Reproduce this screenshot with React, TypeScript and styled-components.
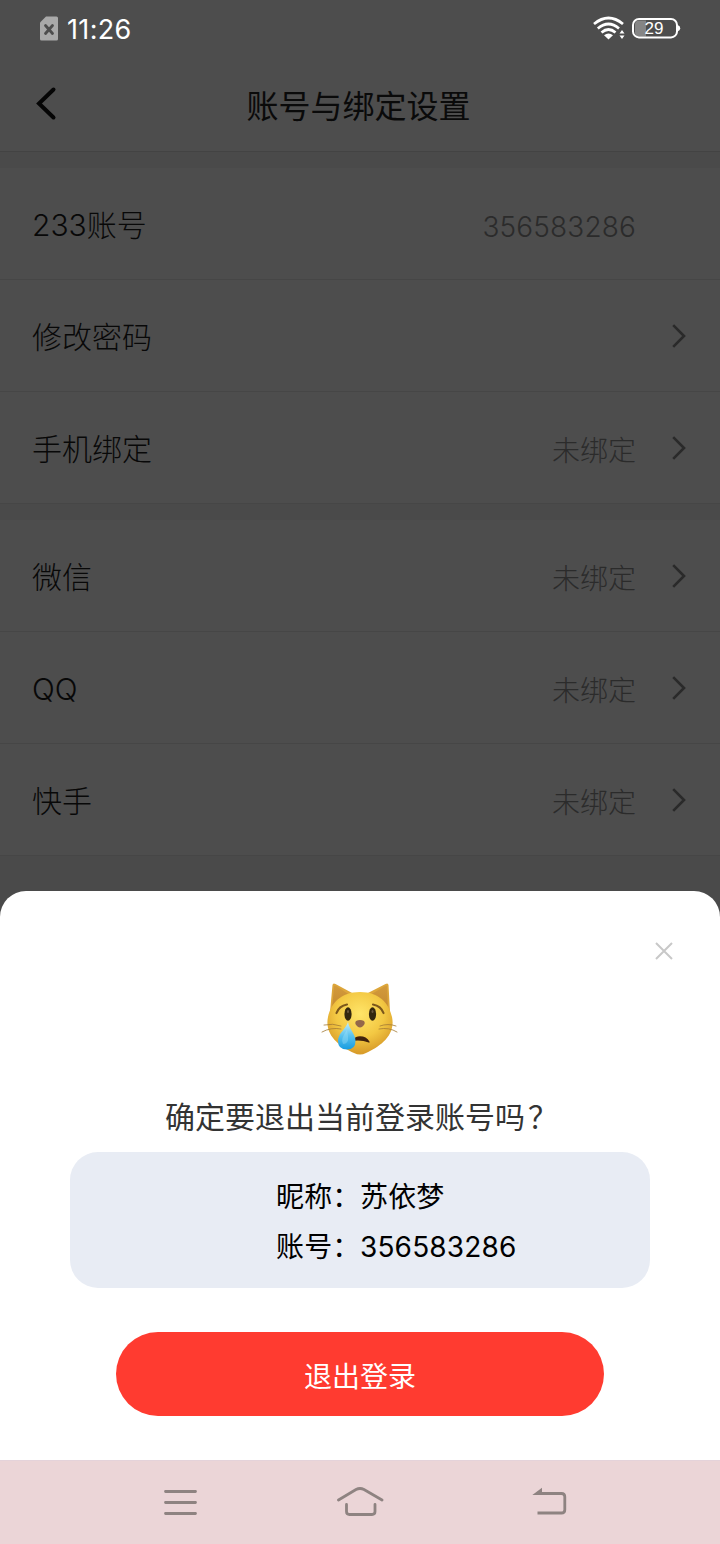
import React from "react";
import styled, { createGlobalStyle } from "styled-components";

const Global = createGlobalStyle`
  * { box-sizing: border-box; }
  body { margin: 0; background: #4a4a4a; font-family: Inter, "Noto Sans CJK SC", sans-serif; }
  button { font: inherit; border: 0; padding: 0; background: none; display: flex; align-items: center; justify-content: center; }
  svg { display: block; flex: none; }
`;

const Screen = styled.div`
  width: 720px;
  height: 1544px;
  display: flex;
  flex-direction: column;
  background: #4a4a4a;
  overflow: hidden;
`;

const StatusBar = styled.div`
  height: 56px;
  flex: none;
  display: flex;
  align-items: center;
  padding: 0 39px 0 40px;
  background: #4d4d4d;
  color: #fff;
`;

const Clock = styled.span`
  margin-left: 8px;
  padding-top: 4px;
  font-size: 27px;
  line-height: 32px;
  letter-spacing: 0.35px;
  flex: 1;
`;

const StatusIcons = styled.div`
  display: flex;
  align-items: flex-end;
  gap: 6px;
`;

const Header = styled.header`
  height: 96px;
  flex: none;
  display: grid;
  grid-template-columns: 60px 1fr 60px;
  align-items: center;
  padding: 0 35px 0 32px;
  background: #4d4d4d;
  border-bottom: 1px solid #434343;
`;

const Title = styled.h1`
  margin: 0;
  padding-top: 6px;
  text-align: center;
  font-size: 32px;
  font-weight: 400;
  line-height: 46px;
  color: #0a0a0a;
`;

const Group = styled.section`
  flex: none;
  margin-top: 16px;
`;

const Row = styled.div`
  height: 112px;
  display: flex;
  align-items: center;
  padding: 2px 32px 0;
  background: #4d4d4d;
  border-bottom: 1px solid #464646;
`;

const Label = styled.span`
  flex: 1;
  font-size: 30px;
  font-weight: 300;
  line-height: 44px;
  color: #080808;
`;

const Value = styled.span<{ $numeric?: boolean }>`
  width: 200px;
  margin-right: 35px;
  padding-top: 5px;
  text-align: right;
  font-size: 28px;
  font-weight: 300;
  line-height: 40px;
  letter-spacing: ${(p) => (p.$numeric ? "0.15px" : "0")};
  color: #2b2b2b;
`;

const ChevronSlot = styled.span`
  width: 17px;
  display: flex;
`;

const Filler = styled.div`
  flex: 1;
`;

const Sheet = styled.section`
  height: 569px;
  flex: none;
  display: flex;
  flex-direction: column;
  align-items: center;
  background: #fff;
  border-radius: 26px 26px 0 0;
  padding-top: 46px;
`;

const CloseButton = styled.button`
  align-self: flex-end;
  width: 28px;
  height: 28px;
  margin: 0 42px 15px 0;
`;

const Question = styled.h2`
  margin: 39px 0 0;
  padding-left: 3px;
  font-size: 30px;
  font-weight: 400;
  line-height: 44px;
  white-space: nowrap;
  color: #333;
`;

const QuestionMark = styled.span`
  margin-left: 3px;
`;

const AccountCard = styled.dl`
  width: 580px;
  height: 136px;
  margin: 13px 0 0;
  padding: 20px 0 0 206px;
  display: grid;
  grid-template-columns: 84px 1fr;
  grid-auto-rows: 50px;
  align-content: start;
  background: #e8ecf4;
  border-radius: 28px;
  font-size: 28px;
  line-height: 50px;
  color: #000;
  dt, dd { margin: 0; height: 50px; white-space: nowrap; letter-spacing: 0.15px; }
`;

const LogoutButton = styled.button`
  width: 488px;
  height: 84px;
  margin-top: 44px;
  padding-top: 5px;
  border-radius: 42px;
  background: #ff3b30;
  color: #fff;
  font-size: 28px;
  line-height: 40px;
`;

const NavBar = styled.nav`
  height: 84px;
  flex: none;
  display: grid;
  grid-template-columns: 180px 190px 60px;
  padding: 0 150px;
  background: #ebd5d7;
  border-top: 1px solid #e4d3da;
`;

const NavButton = styled.button`
  width: 60px;
  height: 83px;
  padding-bottom: 1px;
`;

const Chevron = () => (
  <svg width="17" height="28" viewBox="0 0 17 28" fill="none" stroke="#2a2a2a" strokeWidth="2.6">
    <path d="M2.200 2.200 13 13 2.200 23.800" />
  </svg>
);

const SimIcon = () => (
  <svg width="19" height="25" viewBox="0 0 19 25">
    <path d="M6 .5H16.500Q18 .5 18 2V23Q18 24.500 16.500 24.500H1.500Q0 24.500 0 23V6.500Z" fill="#a9a9a9" />
    <path d="m5.500 9.500 7 8M12.500 9.500l-7 8" stroke="#4d4d4d" strokeWidth="2.8" strokeLinecap="round" />
  </svg>
);

const WifiIcon = () => (
  <svg width="33" height="24" viewBox="0 0 33 24" fill="none" stroke="#fff" strokeWidth="2.7">
    <path d="M1 8Q15.500-4 30 8M4.800 12.500Q15.500 3.500 26 12.500M8.500 16.500Q15.500 10.500 22.500 16.500" />
    <path d="M11 19.200Q15.500 15.700 20 19.200L15.500 23.500Z" fill="#fff" stroke="none" />
    <path d="m29 14 2.500 3.500h-5ZM29 23l2.500-3.500h-5Z" fill="#fff" stroke="none" />
  </svg>
);

const BatteryIcon = () => (
  <svg width="49" height="23" viewBox="0 0 49 23">
    <path d="M7 3.500H14V19.500H7Q3 19.500 3 15.500V7.500Q3 3.500 7 3.500Z" fill="#858585" />
    <rect x="1" y="2" width="44" height="18.400" rx="6" fill="none" stroke="#fff" strokeWidth="2" />
    <path d="M46 8.200Q48.200 8.700 48.200 11.200T46 14.200Z" fill="#fff" />
    <text x="22" y="17" textAnchor="middle" fill="#fff" fontSize="17" fontFamily="Liberation Sans, sans-serif">29</text>
  </svg>
);

const CryingCat = () => (
  <svg width="78" height="76" viewBox="0 0 78 76">
    <defs>
      <radialGradient id="fur" cx=".5" cy=".35" r=".62">
        <stop offset="0" stopColor="#ffe568" />
        <stop offset=".6" stopColor="#f3c843" />
        <stop offset="1" stopColor="#d99d2a" />
      </radialGradient>
      <linearGradient id="ear" x1="0" y1="0" x2="0" y2="1">
        <stop offset="0" stopColor="#d39a3c" />
        <stop offset="1" stopColor="#c48a30" />
      </linearGradient>
      <linearGradient id="tear" x1="0" y1="0" x2="0" y2="1">
        <stop offset="0" stopColor="#c5eefb" />
        <stop offset=".5" stopColor="#59c2ee" />
        <stop offset="1" stopColor="#179ce0" />
      </linearGradient>
    </defs>
    <path d="M9 32 11.500 5Q12 2.500 14.500 4L33 14ZM69 32 67.500 5Q67 2.500 64.500 4L45 14Z" fill="#dda63a" />
    <path d="M11 29 13 7Q13 5 15 6L29 15ZM67 29 66 7Q66 5 64 6L49 15Z" fill="url(#ear)" />
    <path d="M39 12C58 12 68 23 71 37C75 56 58 67 45 73Q39 76 33 73C20 67 3 56 7 37C10 23 20 12 39 12Z" fill="url(#fur)" />
    <g fill="none" stroke="#7c571b" strokeLinecap="round">
      <path d="M15.500 33Q18 26 26 24.500M52 24.500Q60 26 62.500 33" strokeWidth="2.200" />
      <path d="M20 46Q12 43 3 45M20 49Q10 47 1 52M59 46Q67 43 75 46M58 49Q68 47 76 52" stroke="#a27a35" strokeWidth=".8" />
    </g>
    <ellipse cx="27" cy="34" rx="3.600" ry="6.800" fill="#33270f" />
    <ellipse cx="51.500" cy="34" rx="3.600" ry="6.800" fill="#33270f" />
    <ellipse cx="27" cy="31.500" rx="1" ry="1.500" fill="#6a5840" />
    <ellipse cx="51.500" cy="31.500" rx="1" ry="1.500" fill="#6a5840" />
    <path d="M35 41Q39 39 43 41Q45 43.500 41.500 46.500Q39 48.500 36.500 46.500Q33 43.500 35 41Z" fill="#93674a" />
    <path d="M33 60Q35 57 39 57Q45 57 48 62Q41 59 33 60Z" fill="#40210d" stroke="#40210d" strokeWidth="1.300" strokeLinejoin="round" />
    <path d="M27 42C28 49 34.500 54 34.500 61Q34.500 69.500 26 69.500Q17 69.500 17 61C17 53 25 49 27 42Z" fill="url(#tear)" />
    <path d="M26 50Q19 59 22 64Q28 64 27 56Z" fill="#a8e5fa" opacity=".35" />
  </svg>
);

const groups: { label: string; value?: string; link?: boolean }[][] = [
  [
    { label: "233账号", value: "356583286" },
    { label: "修改密码", link: true },
    { label: "手机绑定", value: "未绑定", link: true },
  ],
  [
    { label: "微信", value: "未绑定", link: true },
    { label: "QQ", value: "未绑定", link: true },
    { label: "快手", value: "未绑定", link: true },
  ],
];

export default function App() {
  return (
    <Screen>
      <Global />
      <StatusBar>
        <SimIcon />
        <Clock>11:26</Clock>
        <StatusIcons>
          <WifiIcon />
          <BatteryIcon />
        </StatusIcons>
      </StatusBar>
      <Header>
        <svg width="28" height="36" viewBox="0 0 28 36" fill="none" stroke="#050505" strokeWidth="4" strokeLinecap="round">
          <path d="M21.500 3.500 7 17.500 21.500 31.500" />
        </svg>
        <Title>账号与绑定设置</Title>
      </Header>
      {groups.map((rows, i) => (
        <Group key={i}>
          {rows.map((row) => (
            <Row key={row.label}>
              <Label>{row.label}</Label>
              {row.value && <Value $numeric={!row.link}>{row.value}</Value>}
              <ChevronSlot>{row.link && <Chevron />}</ChevronSlot>
            </Row>
          ))}
        </Group>
      ))}
      <Filler />
      <Sheet>
        <CloseButton aria-label="关闭">
          <svg width="18" height="18" viewBox="0 0 18 18" stroke="#c8c8c8" strokeWidth="2">
            <path d="m1 1 16 16M17 1 1 17" />
          </svg>
        </CloseButton>
        <CryingCat />
        <Question>
          确定要退出当前登录账号吗<QuestionMark>？</QuestionMark>
        </Question>
        <AccountCard>
          <dt>昵称：</dt>
          <dd>苏依梦</dd>
          <dt>账号：</dt>
          <dd>356583286</dd>
        </AccountCard>
        <LogoutButton>退出登录</LogoutButton>
      </Sheet>
      <NavBar>
        <NavButton aria-label="菜单">
          <svg width="34" height="28" viewBox="0 0 34 28" stroke="#8e8381" strokeWidth="2.8" strokeLinecap="round">
            <path d="M2.500 3.500H32.500M2.500 14.500H32.500M2.500 25.500H32.500" />
          </svg>
        </NavButton>
        <NavButton aria-label="主页">
          <svg width="48" height="32" viewBox="0 0 48 32" fill="none" stroke="#8e8381" strokeWidth="2.8" strokeLinecap="round">
            <path d="M2.500 14 20 3.500Q24 1.500 28 3.500L46 14M10.500 18.500V25.500Q10.500 28.500 13.500 28.500H36Q39 28.500 39 25.500V18.500" />
          </svg>
        </NavButton>
        <NavButton aria-label="返回">
          <svg width="36" height="30" viewBox="0 0 36 30" fill="none" stroke="#8e8381" strokeWidth="2.8">
            <path d="M6 6.500H29.500Q32.800 6.500 32.800 9.800V22.700Q32.800 26 29.500 26H5.500" />
            <path d="M.3 7.900 10 .8V7.900Z" fill="#8e8381" stroke="none" />
          </svg>
        </NavButton>
      </NavBar>
    </Screen>
  );
}
